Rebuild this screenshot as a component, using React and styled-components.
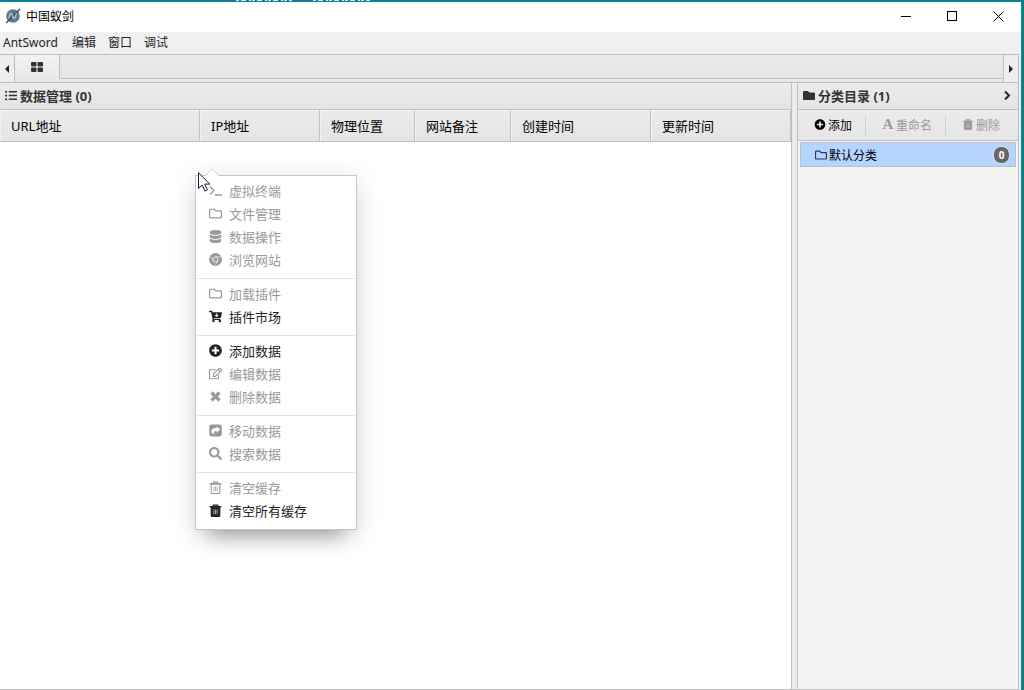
import React from "react";
import styled, { createGlobalStyle } from "styled-components";
import {
  FaCartArrowDown,
  FaDatabase,
  FaFolder,
  FaListUl,
  FaPlusCircle,
  FaRegEdit,
  FaRegFolder,
  FaSearch
} from "react-icons/fa";

const columns = [
  { title: "URL地址", width: 200 },
  { title: "IP地址", width: 120 },
  { title: "物理位置", width: 95 },
  { title: "网站备注", width: 96 },
  { title: "创建时间", width: 140 },
  { title: "更新时间" }
];

const menuGroups = [
  [
    { label: "虚拟终端", icon: <TerminalIcon />, disabled: true },
    { label: "文件管理", icon: <FaRegFolder />, disabled: true },
    { label: "数据操作", icon: <FaDatabase />, disabled: true },
    { label: "浏览网站", icon: <ChromeIcon />, disabled: true }
  ],
  [
    { label: "加载插件", icon: <FaRegFolder />, disabled: true },
    { label: "插件市场", icon: <FaCartArrowDown /> }
  ],
  [
    { label: "添加数据", icon: <FaPlusCircle /> },
    { label: "编辑数据", icon: <FaRegEdit />, disabled: true },
    { label: "删除数据", icon: <RemoveIcon />, disabled: true }
  ],
  [
    { label: "移动数据", icon: <ShareIcon />, disabled: true },
    { label: "搜索数据", icon: <FaSearch />, disabled: true }
  ],
  [
    { label: "清空缓存", icon: <TrashIcon />, disabled: true },
    { label: "清空所有缓存", icon: <TrashIcon filled /> }
  ]
];

function TerminalIcon() {
  return (
    <svg viewBox="0 0 13 12" fill="none" stroke="currentColor" strokeWidth="1.3">
      <path d="M1 2l4 4-4 4M6 10.5h7" />
    </svg>
  );
}

function ChromeIcon() {
  return (
    <svg viewBox="0 0 14 14">
      <circle cx="7" cy="7" r="7" fill="currentColor" />
      <path
        d="M7 4.1h6.4M4.5 8.4L1.500 3.300M9.500 8.400L6.500 13.600"
        stroke="#fff"
        strokeWidth="0.6"
      />
      <circle cx="7" cy="7" r="2.700" fill="currentColor" stroke="#fff" strokeWidth="0.9" />
    </svg>
  );
}

function RemoveIcon() {
  return (
    <svg viewBox="0 0 12 12">
      <path d="M2.300 2.300l7.400 7.400M9.700 2.300L2.300 9.700" stroke="currentColor" strokeWidth="3" />
    </svg>
  );
}

function ShareIcon() {
  return (
    <svg viewBox="0 0 12 12">
      <rect x="0.2" y="0.5" width="11.6" height="11" rx="2.2" fill="currentColor" />
      <path
        d="M7 2.2l3.4 2.9L7 8V6.4C5 6.4 4 7 4.6 9.6 2.6 8.6 1.6 6.8 2.7 5.2 3.5 4 5 3.8 7 3.8z"
        fill="#fff"
      />
    </svg>
  );
}

function TrashIcon({ filled }) {
  return (
    <svg viewBox="0 0 12 12" fill="none" stroke="currentColor">
      <path d="M0.500 2.500h11M4 2.300V1h4v1.300" strokeWidth="1.2" />
      <path
        d="M2 3h8v7.500q0 1-1 1H3q-1 0-1-1z"
        fill={filled ? "currentColor" : "none"}
      />
      <path
        d="M4.500 5v4.500M6 5v4.500M7.500 5v4.500"
        stroke={filled ? "#ccc" : "currentColor"}
        strokeWidth="0.7"
      />
    </svg>
  );
}

function Logo() {
  return (
    <svg width="16" height="16" viewBox="0 0 16 16">
      <circle cx="8" cy="8" r="6.8" fill="#5f7b89" />
      <path d="M1.200 15L15 1" stroke="#2f4552" strokeWidth="1.2" />
      <path
        d="M4 10.500c.3-3.500 1.500-6 2.800-4.500s.4 4.500 2.200 4 1.800-2.500 2.500-5"
        fill="none"
        stroke="#a9bcc5"
        strokeWidth="1.5"
      />
    </svg>
  );
}

function Untitled() {
  return (
    <>
      <GlobalStyle />
      <Desktop>
        <BehindWindow>
          <path
            d="M236 0.500h56M313 0.500h57"
            stroke="#d5ebe6"
            strokeDasharray="3 2 5 3 2 1"
          />
        </BehindWindow>
        <AppWindow>
          <TitleBar>
            <Logo />
            <Title>中国蚁剑</Title>
            <WindowButton aria-label="最小化">
              <svg width="11" height="11" stroke="#000">
                <path d="M0 5.500h10" />
              </svg>
            </WindowButton>
            <WindowButton aria-label="最大化">
              <svg width="11" height="11" stroke="#000" fill="none">
                <rect x="0.500" y="0.500" width="9" height="9" />
              </svg>
            </WindowButton>
            <WindowButton aria-label="关闭">
              <svg width="11" height="11" stroke="#000">
                <path d="M0.500 0.500l10 10M10.500 0.500l-10 10" />
              </svg>
            </WindowButton>
          </TitleBar>

          <MenuBar>
            <MenuBarItem>AntSword</MenuBarItem>
            <MenuBarItem>编辑</MenuBarItem>
            <MenuBarItem>窗口</MenuBarItem>
            <MenuBarItem>调试</MenuBarItem>
          </MenuBar>

          <Workspace>
            <TabBar>
              <ScrollButton aria-label="向左">
                <svg width="4" height="8">
                  <path d="M4 0v8L0 4z" fill="#222" />
                </svg>
              </ScrollButton>
              <Tab aria-label="主页">
                <svg width="12" height="10" fill="#333">
                  <rect width="5.500" height="4.500" rx="1" />
                  <rect x="6.500" width="5.500" height="4.500" rx="1" />
                  <rect y="5.500" width="5.500" height="4.500" rx="1" />
                  <rect x="6.500" y="5.500" width="5.500" height="4.500" rx="1" />
                </svg>
              </Tab>
              <TabSpace />
              <ScrollButton $right aria-label="向右">
                <svg width="4" height="8">
                  <path d="M0 0v8l4-4z" fill="#222" />
                </svg>
              </ScrollButton>
            </TabBar>

            <Panels>
              <DataPanel>
                <PanelHeader>
                  <FaListUl />
                  <PanelTitle>数据管理 (0)</PanelTitle>
                </PanelHeader>
                <Table>
                  <thead>
                    <tr>
                      {columns.map((column) => (
                        <HeadCell key={column.title} $width={column.width}>
                          {column.title}
                        </HeadCell>
                      ))}
                    </tr>
                  </thead>
                </Table>
              </DataPanel>

              <CategoryPanel>
                <PanelHeader>
                  <FaFolder />
                  <PanelTitle>分类目录 (1)</PanelTitle>
                  <CollapseButton aria-label="折叠">
                    <svg width="7" height="9" fill="none" stroke="#222" strokeWidth="2">
                      <path d="M1 0.500l4 4-4 4" />
                    </svg>
                  </CollapseButton>
                </PanelHeader>
                <Toolbar>
                  <ToolButton>
                    <FaPlusCircle />
                    添加
                  </ToolButton>
                  <ToolButton disabled>
                    <FontMark aria-hidden="true">A</FontMark>
                    重命名
                  </ToolButton>
                  <ToolButton disabled>
                    <TrashIcon filled />
                    删除
                  </ToolButton>
                </Toolbar>
                <CategoryList>
                  <Category>
                    <FaRegFolder />
                    默认分类
                    <Count>0</Count>
                  </Category>
                </CategoryList>
              </CategoryPanel>
            </Panels>
          </Workspace>
        </AppWindow>

        <ContextMenu>
          <MenuArrow viewBox="0 0 14 8">
            <path d="M0 8l7-7 7 7" fill="#fff" stroke="#d0d0d0" />
          </MenuArrow>
          {menuGroups.map((group, index) => (
            <MenuGroup key={index}>
              {group.map((item) => (
                <li key={item.label}>
                  <MenuItem disabled={item.disabled}>
                    {item.icon}
                    {item.label}
                  </MenuItem>
                </li>
              ))}
            </MenuGroup>
          ))}
        </ContextMenu>
        <Pointer viewBox="0 0 13 20">
          <path
            d="M0.500 0.800v15.700l3.700-3.500 2.700 6 2.500-1.100-2.700-5.800h5.200z"
            fill="#fff"
            stroke="#1c1c30"
          />
        </Pointer>
      </Desktop>
    </>
  );
}

const GlobalStyle = createGlobalStyle`
  * {
    box-sizing: border-box;
  }

  body {
    margin: 0;
    font-family: "Noto Sans", "Noto Sans CJK SC", sans-serif;
    font-size: 13px;
    color: #000;
  }

  button {
    margin: 0;
    padding: 0;
    border: 0;
    background: none;
    font: inherit;
    color: inherit;
  }
`;

const Desktop = styled.div`
  position: relative;
  display: flex;
  height: 100vh;
  overflow: hidden;
  padding: 1px 2px 0 0;
  background: #008577;
`;

const BehindWindow = styled.svg`
  position: absolute;
  top: 0;
  left: 0;
  width: 100%;
  height: 1px;
`;

const AppWindow = styled.div`
  flex: 1;
  min-width: 0;
  display: flex;
  flex-direction: column;
  border-top: 1px solid #1883b7;
  border-right: 1px solid #1883b7;
  background: #ebebeb;
`;

const TitleBar = styled.header`
  display: flex;
  align-items: center;
  height: 30px;
  padding: 0 0 2px 5px;
  background: #fff;
`;

const Title = styled.span`
  flex: 1;
  margin-left: 5px;
  font-size: 12px;
`;

const WindowButton = styled.button`
  display: flex;
  align-items: center;
  justify-content: center;
  width: 46px;
  height: 28px;
`;

const MenuBar = styled.nav`
  display: flex;
  gap: 12px;
  height: 22px;
  padding-left: 3px;
  background: #f0f0f0;
`;

const MenuBarItem = styled.button`
  font-size: 12px;
  line-height: 22px;
  color: #222;

  &:first-child {
    min-width: 57px;
    text-align: left;
  }
`;

const Workspace = styled.main`
  flex: 1;
  min-height: 0;
  display: flex;
  flex-direction: column;
  margin-right: 2px;
  border: 1px solid #c0c0c0;
  border-left: 0;
`;

const TabBar = styled.div`
  display: flex;
  height: 28px;
  border-bottom: 1px solid #c0c0c0;
  background: #e6e6e6;
`;

const ScrollButton = styled.button`
  display: flex;
  align-items: center;
  justify-content: center;
  width: 15px;
  background: #eee;
  border-right: ${(props) => (props.$right ? "0" : "1px solid #c0c0c0")};
  border-left: ${(props) => (props.$right ? "1px solid #c0c0c0" : "0")};
`;

const Tab = styled.button`
  display: flex;
  align-items: center;
  justify-content: center;
  width: 45px;
  height: 24px;
  border-right: 1px solid #c0c0c0;
  background: linear-gradient(#f2f2f2, #e8e8e8);
`;

const TabSpace = styled.div`
  flex: 1;
  height: 24px;
  border-bottom: 1px solid #c0c0c0;
  background: linear-gradient(#ebebeb, #e4e4e4);
`;

const Panels = styled.div`
  flex: 1;
  min-height: 0;
  display: flex;
  gap: 5px;
`;

const DataPanel = styled.section`
  flex: 1;
  min-width: 0;
  border-right: 1px solid #c0c0c0;
  background: #fff;
`;

const CategoryPanel = styled.section`
  flex: none;
  width: 221px;
  display: flex;
  flex-direction: column;
  border-left: 1px solid #c0c0c0;
  background: #f4f4f4;
`;

const PanelHeader = styled.div`
  display: flex;
  align-items: center;
  gap: 3px;
  height: 27px;
  padding: 0 7px 2px 5px;
  border-bottom: 1px solid #c0c0c0;
  background: linear-gradient(#ebebeb, #e4e4e4);
  color: #333;

  > svg {
    width: 12px;
  }
`;

const PanelTitle = styled.h2`
  flex: 1;
  margin: 0;
  font-size: 13px;
  font-weight: 700;
`;

const CollapseButton = styled.button`
  display: flex;
`;

const Table = styled.table`
  width: 100%;
  border-collapse: separate;
  border-spacing: 0;
  table-layout: fixed;
`;

const HeadCell = styled.th`
  width: ${(props) => (props.$width ? `${props.$width}px` : "auto")};
  height: 32px;
  padding: 0 0 0 11px;
  border-right: 1px solid #c0c0c0;
  border-bottom: 1px solid #c0c0c0;
  background: linear-gradient(#ebebeb, #e4e4e4);
  box-shadow: inset 1px 1px #f2f2f2;
  font-weight: 400;
  text-align: left;
`;

const Toolbar = styled.div`
  display: flex;
  align-items: center;
  height: 31px;
  padding-bottom: 1px;
  border-bottom: 1px solid #c0c0c0;
  background: linear-gradient(#ebebeb, #e6e6e6);
`;

const ToolButton = styled.button`
  flex: none;
  display: flex;
  align-items: center;
  gap: 2px;
  height: 20px;
  padding: 0 13px 0 16px;
  font-size: 12px;
  white-space: nowrap;

  &:disabled {
    color: #999;
  }

  & + & {
    border-left: 1px solid #c4d0da;
  }

  svg {
    width: 12px;
    height: 11px;
  }
`;

const FontMark = styled.span`
  width: 12px;
  font-family: "Liberation Serif", serif;
  font-size: 15px;
  font-weight: 700;
`;

const CategoryList = styled.ul`
  margin: 0;
  padding: 1px 2px;
  list-style: none;
`;

const Category = styled.li`
  display: flex;
  align-items: center;
  gap: 2px;
  height: 25px;
  padding: 0 5px 0 14px;
  border: 1px solid #c0c0c0;
  background: #b5d4ff;
  font-size: 12px;

  svg {
    width: 12px;
    color: #335;
  }
`;

const Count = styled.span`
  width: 17px;
  height: 18px;
  margin-left: auto;
  border: 1px solid #d8e4f4;
  border-radius: 8px;
  background: #666;
  color: #fff;
  font-size: 10px;
  font-weight: 700;
  line-height: 16px;
  text-align: center;
`;

// Opens at the pointer, above the panels
const ContextMenu = styled.div`
  position: absolute;
  top: 175px;
  left: 195px;
  width: 162px;
  padding: 3px 1px 7px;
  border: 1px solid #c7c7c7;
  background: #fff;
  box-shadow: 0 5px 25px rgba(0, 0, 0, 0.15), 0 18px 20px -14px rgba(0, 0, 0, 0.35);
`;

const MenuArrow = styled.svg`
  position: absolute;
  top: -8px;
  left: 9px;
  width: 14px;
  height: 8px;
`;

const MenuGroup = styled.ul`
  margin: 0;
  padding: 0;
  list-style: none;

  & + & {
    margin-top: 7px;
    padding-top: 3px;
    border-top: 1px solid #e2e2e2;
  }
`;

const MenuItem = styled.button`
  display: flex;
  align-items: center;
  gap: 7px;
  width: 100%;
  height: 23px;
  padding-left: 12px;
  color: #222;

  &:disabled {
    color: #999;
  }

  svg {
    width: 13px;
    height: 13px;
  }
`;

const Pointer = styled.svg`
  position: absolute;
  top: 172px;
  left: 198px;
  width: 13px;
  height: 20px;
`;

export default Untitled;
